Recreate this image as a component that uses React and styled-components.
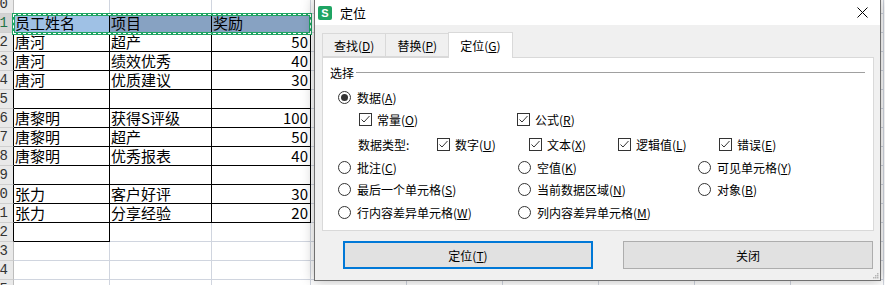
import React from 'react';
import styled, { createGlobalStyle } from 'styled-components';

const GlobalStyle = createGlobalStyle`
  html, body {
    margin: 0;
    padding: 0;
    background: #fff;
    overflow: hidden;
  }
  * { box-sizing: border-box; }
`;

const UI_FONT = `"Noto Sans CJK SC", "Noto Sans", sans-serif`;

// 표 데이터
const rows = [
  { n: 10, cells: ['', '', ''] },
  { n: 11, cells: ['员工姓名', '项目', '奖励'], head: true },
  { n: 12, cells: ['唐河', '超产', '50'] },
  { n: 13, cells: ['唐河', '绩效优秀', '40'] },
  { n: 14, cells: ['唐河', '优质建议', '30'] },
  { n: 15, cells: ['', '', ''] },
  { n: 16, cells: ['唐黎明', '获得S评级', '100'] },
  { n: 17, cells: ['唐黎明', '超产', '50'] },
  { n: 18, cells: ['唐黎明', '优秀报表', '40'] },
  { n: 19, cells: ['', '', ''] },
  { n: 20, cells: ['张力', '客户好评', '30'] },
  { n: 21, cells: ['张力', '分享经验', '20'] },
  { n: 22, cells: ['', '', ''] },
  { n: 23, cells: ['', '', ''] },
  { n: 24, cells: ['', '', ''] },
  { n: 25, cells: ['', '', ''] },
];

const EXTRA_COLS = 6;
const GRID = '#d0d5df';
const BLACK = '#000';

const inTable = (i, c) => {
  const r = rows[i];
  if (!r) return false;
  if (r.n >= 11 && r.n <= 21) return c >= 1 && c <= 3;
  if (r.n === 22) return c === 1;
  return false;
};

const Page = styled.div`
  position: relative;
  width: 885px;
  height: 285px;
  overflow: hidden;
  font-family: ${UI_FONT};
`;

const Sheet = styled.div`
  display: flex;
  flex-direction: column;
  margin-top: -5px; /* scrolled sheet */
`;

const Row = styled.div`
  position: relative;
  display: grid;
  grid-template-columns: 14px 96px 102px 99px repeat(5, 96px) 93px;
  height: 19px;
`;

const RowHead = styled.div`
  display: flex;
  justify-content: flex-end;
  align-items: flex-end;
  overflow: hidden;
  white-space: nowrap;
  padding-right: 5px;
  background: ${(p) => (p.$active ? '#d3d3d3' : '#e9e9e9')};
  color: ${(p) => (p.$active ? '#217346' : '#333')};
  border-right: 1px solid ${(p) => p.$right};
  border-bottom: 1px solid #cfcfcf;
  font-family: "Liberation Mono", monospace;
  font-size: 14px;
  line-height: 17px;
`;

const Cell = styled.div`
  display: flex;
  align-items: flex-end;
  justify-content: ${(p) => (p.$num ? 'flex-end' : 'flex-start')};
  padding: 0 2px 0 1px;
  white-space: nowrap;
  overflow: hidden;
  background: ${(p) => p.$bg || '#fff'};
  border-right: 1px solid ${(p) => p.$right};
  border-bottom: 1px solid ${(p) => p.$bottom};
  font-size: 15px;
  line-height: 18px;
  color: #000;
`;

const Selection = styled.div`
  position: absolute;
  z-index: 2;
  left: 12px;
  top: -1px;
  width: 300px;
  height: 22px;
  border: 3px solid #1fa463;
  pointer-events: none;

  &::after {
    content: '';
    position: absolute;
    inset: -2px;
    border: 1px dashed #fff;
  }
`;

/* ---------- dialog ---------- */

const Dialog = styled.div`
  position: absolute;
  z-index: 5;
  left: 314px;
  top: -1px;
  width: 567px;
  height: 282px;
  display: flex;
  flex-direction: column;
  background: #f0f0f0;
  border: 1px solid #707070;
  box-shadow: 0 0 12px rgba(0, 0, 0, 0.28);
  font-size: 12px;
  color: #000;
`;

const TitleBar = styled.div`
  height: 25px;
  flex: none;
  display: flex;
  align-items: center;
  padding: 0 12px 0 3px;
  background: #fff;
`;

const AppIcon = styled.span`
  width: 14px;
  height: 14px;
  border-radius: 2px;
  background: #1fa463;
  color: #fff;
  font-family: "Liberation Sans", sans-serif;
  font-weight: bold;
  font-size: 11px;
  line-height: 14px;
  text-align: center;
`;

const Title = styled.span`
  margin-left: 8px;
  font-size: 13px;
  flex: 1;
`;

const Body = styled.div`
  flex: 1;
  display: flex;
  flex-direction: column;
  padding: 8px 6px 0 7px;
`;

const Tabs = styled.div`
  display: flex;
  align-items: flex-end;
  height: 24px;
`;

const Tab = styled.div`
  position: relative;
  height: ${(p) => (p.$active ? '26px' : '24px')};
  margin-left: -1px;
  margin-bottom: ${(p) => (p.$active ? '-1px' : '0')};
  padding: 0 11px;
  display: flex;
  align-items: center;
  background: ${(p) => (p.$active ? '#fff' : '#f0f0f0')};
  border: 1px solid #d9d9d9;
  border-bottom: ${(p) => (p.$active ? 'none' : '1px solid #d9d9d9')};
  z-index: ${(p) => (p.$active ? 1 : 0)};

  &:first-child { margin-left: 0; }
`;

const Panel = styled.div`
  height: 174px;
  background: #fff;
  border: 1px solid #d9d9d9;
  padding: 3px 8px 0 7px;
`;

const GroupHead = styled.div`
  display: flex;
  align-items: center;
  height: 22px;
`;

const GroupLine = styled.div`
  flex: 1;
  height: 1px;
  margin-left: 2px;
  background: #a0a0a0;
`;

const Options = styled.div`
  margin-top: 3px;
  padding-left: 8px;
`;

const OptRow = styled.div`
  display: flex;
  align-items: center;
  height: ${(p) => p.$h || 22}px;
  margin-top: ${(p) => p.$mt || 0}px;
  padding-left: ${(p) => p.$indent || 0}px;
`;

const RadioGrid = styled.div`
  display: grid;
  grid-template-columns: repeat(3, 180px);
  grid-auto-rows: 22.5px;
  align-items: center;
`;

const Item = styled.label`
  display: flex;
  align-items: center;
  gap: ${(p) => p.$gap || 6}px;
  width: ${(p) => (p.$w ? `${p.$w}px` : 'auto')};
  white-space: nowrap;
`;

const Circle = styled.span`
  width: 13px;
  height: 13px;
  border-radius: 50%;
  border: 1px solid #333;
  display: flex;
  align-items: center;
  justify-content: center;
  flex: none;

  &::after {
    content: '';
    width: 7px;
    height: 7px;
    border-radius: 50%;
    background: ${(p) => (p.$on ? '#333' : 'transparent')};
  }
`;

const Box = styled.span`
  width: 13px;
  height: 13px;
  border: 1px solid #333;
  flex: none;
  display: flex;
`;

const Key = styled.span`
  text-decoration: underline;
  text-underline-offset: 1px;
`;

const TypeLabel = styled.span`
  width: 79px;
`;

const Buttons = styled.div`
  display: flex;
  gap: 30px;
  margin-top: 10px;
  padding-left: 21px;
`;

const Button = styled.button`
  width: 250px;
  height: 28px;
  background: #e1e1e1;
  border: ${(p) => (p.$primary ? '2px solid #0078d7' : '1px solid #adadad')};
  font-family: ${UI_FONT};
  font-size: 12px;
  color: #000;
  padding: 0;
`;

const Grip = styled.svg`
  position: absolute;
  right: 1px;
  bottom: 1px;
`;

const Label = ({ text, k }) => (
  <span>
    {text}
    {k && (
      <>
        (<Key>{k}</Key>)
      </>
    )}
  </span>
);

const Radio = ({ on, text, k }) => (
  <Item>
    <Circle $on={on} />
    <Label text={text} k={k} />
  </Item>
);

const Check = ({ text, k, w }) => (
  <Item $gap={5} $w={w}>
    <Box>
      <svg width="11" height="11" viewBox="0 0 11 11">
        <polyline points="1.5,5.5 4,8 9.5,2" fill="none" stroke="#333" strokeWidth="1" />
      </svg>
    </Box>
    <Label text={text} k={k} />
  </Item>
);

function SheetView() {
  return (
    <Sheet>
      {rows.map((r, i) => {
        const cols = [...r.cells, ...Array(EXTRA_COLS).fill('')];
        return (
          <Row key={r.n}>
            <RowHead $active={r.head} $right={inTable(i, 1) ? BLACK : '#bdbdbd'}>
              {r.n}
            </RowHead>
            {cols.map((v, j) => {
              const c = j + 1;
              const right = inTable(i, c) || inTable(i, c + 1) ? BLACK : GRID;
              const bottom = inTable(i, c) || inTable(i + 1, c) ? BLACK : GRID;
              let bg;
              if (r.head && c === 1) bg = '#9fc1e5';
              else if (r.head && c <= 3) bg = '#87a2c2';
              return (
                <Cell key={c} $right={right} $bottom={bottom} $bg={bg} $num={/^\d+$/.test(v)}>
                  {v}
                </Cell>
              );
            })}
            {r.head && <Selection />}
          </Row>
        );
      })}
    </Sheet>
  );
}

export default function App() {
  return (
    <Page>
      <GlobalStyle />
      <SheetView />
      <Dialog>
        <TitleBar>
          <AppIcon>S</AppIcon>
          <Title>定位</Title>
          <svg width="11" height="11" viewBox="0 0 11 11">
            <path d="M0.5 0.5 L10.5 10.5 M10.5 0.5 L0.5 10.5" stroke="#000" strokeWidth="1" />
          </svg>
        </TitleBar>
        <Body>
          <Tabs>
            <Tab><Label text="查找" k="D" /></Tab>
            <Tab><Label text="替换" k="P" /></Tab>
            <Tab $active><Label text="定位" k="G" /></Tab>
          </Tabs>
          <Panel>
            <GroupHead>
              <span>选择</span>
              <GroupLine />
            </GroupHead>
            <Options>
              <OptRow>
                <Radio on text="数据" k="A" />
              </OptRow>
              <OptRow $indent={21}>
                <Check text="常量" k="O" w={158} />
                <Check text="公式" k="R" />
              </OptRow>
              <OptRow $indent={20} $mt={2} $h={24}>
                <TypeLabel>数据类型:</TypeLabel>
                <Check text="数字" k="U" w={92} />
                <Check text="文本" k="X" w={89} />
                <Check text="逻辑值" k="L" w={101} />
                <Check text="错误" k="E" />
              </OptRow>
              <RadioGrid>
                <Radio text="批注" k="C" />
                <Radio text="空值" k="K" />
                <Radio text="可见单元格" k="Y" />
                <Radio text="最后一个单元格" k="S" />
                <Radio text="当前数据区域" k="N" />
                <Radio text="对象" k="B" />
                <Radio text="行内容差异单元格" k="W" />
                <Radio text="列内容差异单元格" k="M" />
              </RadioGrid>
            </Options>
          </Panel>
          <Buttons>
            <Button $primary><Label text="定位" k="T" /></Button>
            <Button>关闭</Button>
          </Buttons>
        </Body>
        <Grip width="7" height="7" viewBox="0 0 7 7">
          {[[5, 1], [3, 3], [5, 3], [1, 5], [3, 5], [5, 5]].map(([x, y]) => (
            <rect key={`${x}-${y}`} x={x} y={y} width="1.5" height="1.5" fill="#b5b5b5" />
          ))}
        </Grip>
      </Dialog>
    </Page>
  );
}
